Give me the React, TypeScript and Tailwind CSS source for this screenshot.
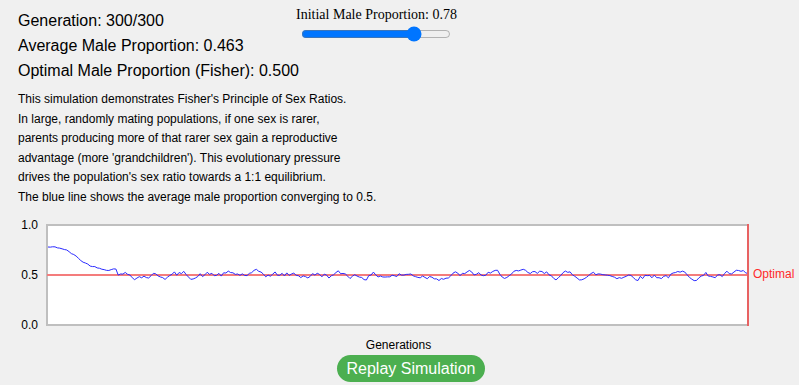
import { useMemo } from "react";

// chart frame, in page pixels
const X0 = 47;
const X1 = 748;
const Y_TOP = 225;
const Y_BOT = 325;
const GENS = 300;

function mulberry32(seed: number) {
  let a = seed;
  return () => {
    a |= 0;
    a = (a + 0x6d2b79f5) | 0;
    let t = Math.imul(a ^ (a >>> 15), 1 | a);
    t = (t + Math.imul(t ^ (t >>> 7), 61 | t)) ^ t;
    return ((t ^ (t >>> 14)) >>> 0) / 4294967296;
  };
}

// rough shape of the early convergence, [generation, proportion]
const ANCHORS: [number, number][] = [
  [0, 0.78],
  [3, 0.775],
  [6, 0.765],
  [8, 0.745],
  [11, 0.7],
  [15, 0.63],
  [18, 0.595],
  [22, 0.57],
  [25, 0.56],
  [27, 0.56],
  [29, 0.57],
  [31, 0.525],
  [35, 0.505],
  [40, 0.5],
];

function trend(t: number) {
  for (let i = 1; i < ANCHORS.length; i++) {
    const [g1, v1] = ANCHORS[i];
    const [g0, v0] = ANCHORS[i - 1];
    if (t <= g1) return v0 + ((v1 - v0) * (t - g0)) / (g1 - g0);
  }
  return 0.5;
}

function useSeries() {
  return useMemo(() => {
    const rand = mulberry32(42);
    const out: string[] = [];
    let noise = 0;
    for (let t = 0; t < GENS; t++) {
      noise = noise * 0.72 + (rand() - 0.5) * 0.06;
      const w = t < 30 ? 0.25 : 1;
      const p = t === 0 ? 0.78 : trend(t) + noise * w;
      const x = X0 + 1 + (t * (X1 - X0 - 1)) / (GENS - 1);
      const y = Y_BOT - p * (Y_BOT - Y_TOP);
      out.push(`${x.toFixed(2)},${y.toFixed(2)}`);
    }
    return out.join(" ");
  }, []);
}

export default function App() {
  const points = useSeries();

  return (
    <div className="w-[799px] h-[385px] overflow-hidden bg-[#f0f0f0] text-black font-['Liberation_Sans',Arial,sans-serif]">
      {/* Stats + slider */}
      <div className="flex">
        <div className="w-[279px] shrink-0 pl-[18px] pt-[8px] text-[16px] leading-[25px] whitespace-nowrap">
          <p>Generation: 300/300</p>
          <p>Average Male Proportion: 0.463</p>
          <p>Optimal Male Proportion (Fisher): 0.500</p>
        </div>
        <div className="ml-[17px] pt-[7px] flex flex-col items-center">
          <label className="text-[14px] leading-[16px] whitespace-nowrap font-['Liberation_Serif','Times_New_Roman',serif]">
            Initial Male Proportion: 0.78
          </label>
          <input
            type="range"
            min={0}
            max={1}
            step={0.01}
            defaultValue={0.78}
            className="w-[150px] mt-[3px] accent-[#0075ff]"
          />
        </div>
      </div>

      {/* Description */}
      <div className="pl-[18px] mt-[7px] text-[12px] leading-[19.6px] whitespace-nowrap">
        <p>This simulation demonstrates Fisher's Principle of Sex Ratios.</p>
        <p>In large, randomly mating populations, if one sex is rarer,</p>
        <p>parents producing more of that rarer sex gain a reproductive</p>
        <p>advantage (more 'grandchildren'). This evolutionary pressure</p>
        <p>drives the population's sex ratio towards a 1:1 equilibrium.</p>
        <p>The blue line shows the average male proportion converging to 0.5.</p>
      </div>

      {/* Chart */}
      <svg
        width={799}
        height={130}
        viewBox="0 208 799 130"
        className="block"
        fontFamily="'Liberation Sans', Arial, sans-serif"
        fontSize={12}
      >
        <rect x={X0} y={Y_TOP} width={X1 - X0} height={Y_BOT - Y_TOP} fill="#fff" stroke="#bfbfbf" strokeWidth={2} />
        <line x1={X0} y1={275} x2={X1} y2={275} stroke="#f47c7c" strokeWidth={2} />
        <polyline points={points} fill="none" stroke="#2a2aff" strokeWidth={1} strokeLinejoin="round" />
        <line x1={X1} y1={Y_TOP - 1} x2={X1} y2={Y_BOT + 1} stroke="#e86262" strokeWidth={2} />
        <text x={38} y={229} textAnchor="end" fill="#000">1.0</text>
        <text x={38} y={279} textAnchor="end" fill="#000">0.5</text>
        <text x={38} y={329} textAnchor="end" fill="#000">0.0</text>
        <text x={753} y={278} fill="#ff2a2a">Optimal</text>
      </svg>

      <p className="text-center text-[12px] leading-[14px] w-[797px]">Generations</p>

      <button className="ml-[337px] mt-[3px] w-[148px] h-[27px] rounded-full bg-[#4caf50] text-white text-[16px] leading-[27px]">
        Replay Simulation
      </button>
    </div>
  );
}
